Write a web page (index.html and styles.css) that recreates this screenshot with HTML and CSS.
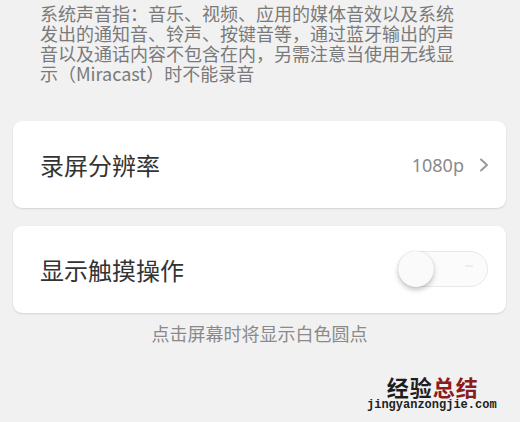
FILE: index.html
```html
<!DOCTYPE html>
<html lang="zh">
<head>
<meta charset="utf-8">
<link rel="stylesheet" href="styles.css">
</head>
<body>
<div class="page">
  <p class="note">系统声音指：音乐、视频、应用的媒体音效以及系统<br>发出的通知音、铃声、按键音等，通过蓝牙输出的声<br>音以及通话内容不包含在内，另需注意当使用无线显<br>示（Miracast）时不能录音</p>

  <div class="card card-first">
    <span class="label">录屏分辨率</span>
    <span class="value">1080p</span>
    <svg class="chev" width="10" height="14" viewBox="0 0 10 14"><polyline points="2,1.5 8,7 2,12.5" fill="none" stroke="#9a9a9a" stroke-width="2" stroke-linecap="round" stroke-linejoin="round"/></svg>
  </div>

  <div class="card card-second">
    <span class="label">显示触摸操作</span>
    <div class="toggle"><div class="knob"></div><div class="mark"></div></div>
  </div>

  <p class="caption">点击屏幕时将显示白色圆点</p>
</div>
<div class="watermark">
  <div class="wm-title">经验<span class="wm-red">总结</span></div>
  <div class="wm-url">jingyanzongjie.com</div>
</div>
</body>
</html>
```
FILE: styles.css
```css
html, body {
  margin: 0;
  padding: 0;
  background: #f1f1f1;
}
body {
  width: 520px;
  height: 422px;
  overflow: hidden;
  position: relative;
  font-family: "Noto Sans CJK SC", "Noto Sans", sans-serif;
}
.page {
  padding: 3px 14px 0 13px;
}
.note {
  margin: 0;
  padding-left: 27px;
  font-size: 18px;
  line-height: 20px;
  color: #7a7a7a;
  white-space: nowrap;
}
.card {
  height: 87px;
  background: #fff;
  border-radius: 9px;
  box-shadow: 0 1px 2px rgba(0,0,0,0.13);
  display: flex;
  align-items: center;
  padding: 0 17px 0 27px;
  box-sizing: border-box;
}
.card-first {
  margin-top: 38px;
}
.card-second {
  margin-top: 18px;
  padding-right: 18px;
}
.label {
  font-size: 24px;
  color: #333;
  flex: 1;
}
.value {
  font-family: "Noto Sans", sans-serif;
  font-size: 18px;
  color: #8a8a8a;
  margin-right: 15px;
}
.chev {
  display: block;
}
.toggle {
  width: 90px;
  height: 36px;
  box-sizing: border-box;
  border: 1px solid #e8e8e8;
  border-radius: 18px;
  background: #fbfbfb;
  display: flex;
  align-items: center;
  justify-content: space-between;
  margin-top: -2px;
}
.knob {
  width: 36px;
  height: 36px;
  margin-left: -1px;
  border-radius: 50%;
  background: #fafafa;
  box-shadow: 0 3px 5px rgba(0,0,0,0.22), 0 0 1px rgba(0,0,0,0.2);
}
.mark {
  width: 8px;
  height: 2px;
  background: #ececec;
  margin-right: 14px;
  margin-bottom: 6px;
}
.caption {
  margin: 10px 0 0;
  text-align: center;
  font-size: 18px;
  line-height: 20px;
  color: #8a8a8a;
}
.watermark {
  position: absolute;
  left: 367px;
  top: 374px;
  text-align: center;
}
.wm-title {
  font-size: 22px;
  font-weight: 700;
  line-height: 24px;
  color: #1e1e1e;
  padding-left: 2px;
  letter-spacing: 1px;
}
.wm-red {
  color: #8a1c1c;
}
.wm-url {
  font-family: "Liberation Mono", monospace;
  font-weight: 700;
  font-size: 12px;
  line-height: 12px;
  color: #222;
  margin-top: 1px;
}
```
